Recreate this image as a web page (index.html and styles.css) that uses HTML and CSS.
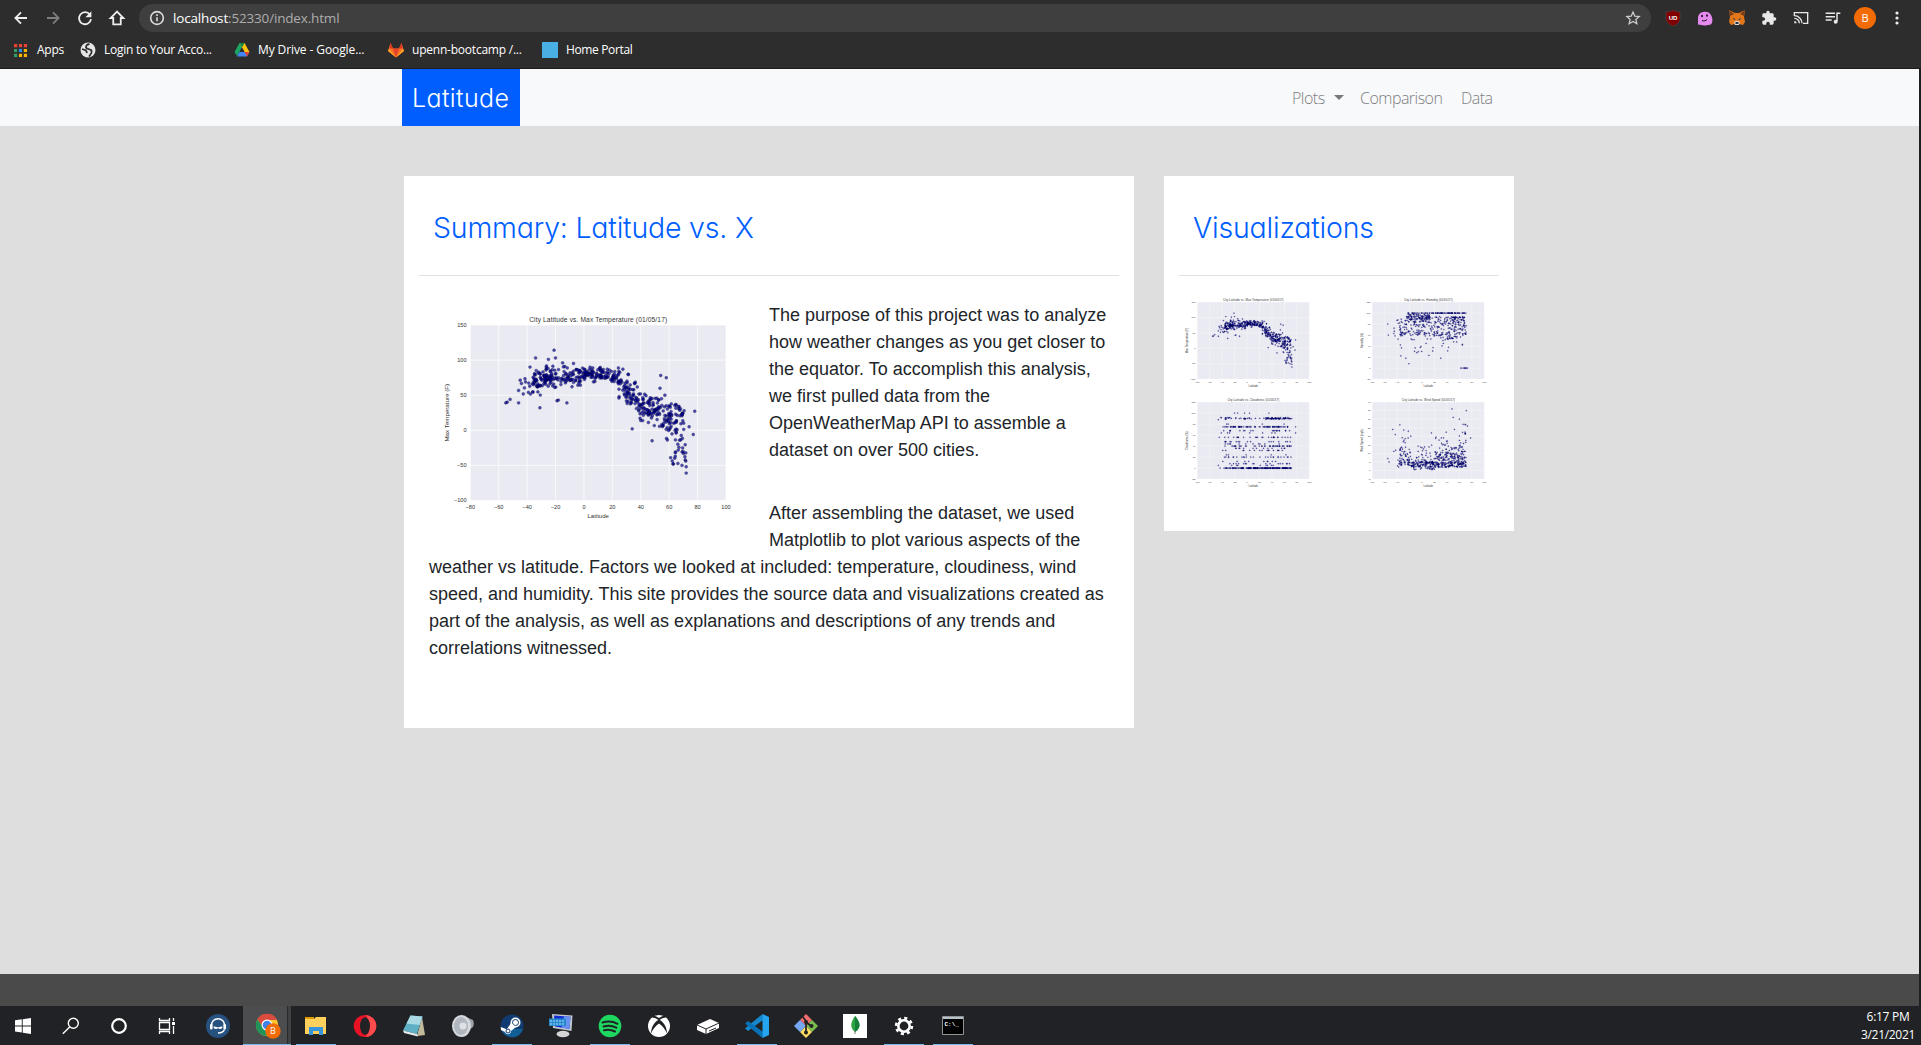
FILE: index.html
```html
<!DOCTYPE html>
<html lang="en">
<head>
<meta charset="utf-8">
<title>Latitude</title>
<link rel="stylesheet" href="styles.css">
</head>
<body>
<header class="chrome">
  <div class="toolbar">
    <div class="nav-buttons">
      <svg viewBox="0 0 24 24" class="ico"><path d="M20 12H5M12 4.500 4.500 12 12 19.500" class="line"/></svg>
      <svg viewBox="0 0 24 24" class="ico dim"><path d="M4 12h15M12 4.500 19.500 12 12 19.500" class="line"/></svg>
      <svg viewBox="0 0 24 24" class="ico"><path d="M18.500 7.500A8 8 0 1 0 20 13.500" class="line"/><path d="M20.500 3v8h-8z" fill="#eee"/></svg>
      <svg viewBox="0 0 24 24" class="ico"><path d="M12 3.500 3.500 12H7v8.500h10V12h3.500z" class="line"/></svg>
    </div>
    <div class="omnibox">
      <svg viewBox="0 0 24 24" class="info"><circle cx="12" cy="12" r="9.500" class="line"/><path d="M12 11v6M12 6.500v2.500" class="line"/></svg>
      <span class="url"><b>localhost</b>:52330/index.html</span>
      <svg viewBox="0 0 24 24" class="star"><path d="m12 3 2.700 6.200 6.600.6-5 4.400 1.500 6.500-5.800-3.500-5.800 3.500 1.500-6.500-5-4.400 6.600-.6z" fill="none" stroke="#ccc" stroke-width="1.900"/></svg>
    </div>
    <div class="extensions">
      <svg viewBox="0 0 16 16"><path d="M8 0c2 1.300 4 2 7 2v6c0 4-3 6.500-7 8-4-1.500-7-4-7-8V2c3 0 5-.7 7-2z" fill="#800000" stroke="#555" stroke-width=".5"/><text x="8" y="9.600" class="ub">UD</text></svg>
      <svg viewBox="0 0 16 16"><path d="M1 14.500V7a7 6.500 0 0 1 13.500-1c1.500 4 1.500 9-3 9-1 0-2 .6-4 .6z" fill="#e78af0"/><ellipse cx="5" cy="6" rx=".8" ry="1.200"/><ellipse cx="10" cy="5.500" rx=".8" ry="1.200"/><path d="M5 10.500c2 1 4 0 5-1" fill="none" stroke="#111"/></svg>
      <svg viewBox="0 0 16 16"><path d="m0 0 6 3h4l6-3-1 7 1 5-2 3-4-1H6l-4 1-2-3 1-5z" fill="#e2761b"/><path d="m0 0 5 4-4 2zM16 0l-5 4 4 2z" fill="#763d16"/><path d="m5 12 2-1h2l2 1-1 3H6z" fill="#e4d9cc"/><path d="M6.500 12h3v2h-3zM3.500 8l3 1-1 1zM12.500 8l-3 1 1 1z" fill="#233447"/></svg>
      <svg viewBox="0 0 24 24"><path d="M20.500 11H19V7a2 2 0 0 0-2-2h-4V3.500a2.500 2.500 0 0 0-5 0V5H4a2 2 0 0 0-2 2v3.800h1.500a2.700 2.700 0 0 1 0 5.400H2V20a2 2 0 0 0 2 2h3.800v-1.500a2.700 2.700 0 0 1 5.400 0V22H17a2 2 0 0 0 2-2v-4h1.500a2.500 2.500 0 0 0 0-5z" fill="#e8e8e8"/></svg>
      <svg viewBox="0 0 24 24"><path d="M2 9V4h20v16h-7M2 12.500A7.500 7.500 0 0 1 9.500 20M2 8.500A11.500 11.500 0 0 1 13.500 20" fill="none" stroke="#e8e8e8" stroke-width="2"/><path d="M2 16.500V20h3.500A3.500 3.500 0 0 0 2 16.500" fill="#e8e8e8"/></svg>
      <svg viewBox="0 0 24 24"><path d="M1 5h14M1 10h14M1 15h9M18 17V5h5" fill="none" stroke="#e8e8e8" stroke-width="2.200"/><circle cx="16" cy="17.500" r="3" fill="#e8e8e8"/></svg>
      <span class="avatar">B</span>
      <svg viewBox="0 0 16 16" fill="#eee"><circle cx="8" cy="3" r="1.600"/><circle cx="8" cy="8" r="1.600"/><circle cx="8" cy="13" r="1.600"/></svg>
    </div>
  </div>
  <div class="bookmarks">
    <a class="bm apps"><svg viewBox="0 0 14 14"><path d="M0 0h3.400v3.400H0zM5.300 0h3.400v3.400H5.300zM10.600 0H14v3.400h-3.400z" fill="#ea4335"/><path d="M0 5.300h3.400v3.400H0zM0 10.600h3.400V14H0z" fill="#34a066"/><path d="M5.300 5.300h3.400v3.400H5.300z" fill="#2a8cf5"/><path d="M10.600 5.300H14v3.400h-3.400zM5.300 10.600h3.400V14H5.300zM10.600 10.600H14V14h-3.400z" fill="#fbb400"/></svg><span>Apps</span></a>
    <a class="bm login"><svg viewBox="0 0 16 16"><circle cx="8" cy="8" r="7.500" fill="#e6e6e6"/><path d="M9.500 2C6 2.500 5 5 7 6.500l4 1.500c2 2 0 4-2 6.500M2 7l4 1.500 1 2.500" fill="none" stroke="#303030" stroke-width="1.800"/></svg><span>Login to Your Acco...</span></a>
    <a class="bm drive"><svg viewBox="0 0 16 16"><path d="M5.500 1h5L8 5.500 3 14 .5 10z" fill="#1da362"/><path d="M5.500 1h5l5 9h-5z" fill="#ffc107"/><path d="M5.500 1 8 5.500 10.500 1z" fill="#12834b"/><path d="M5.300 10h10.200L13 14.500H3z" fill="#4285f4"/><path d="m10.500 10 2.500 4.500 2.500-4.500z" fill="#ea4335"/><path d="m8 5.700 2.500 4.300h-5z" fill="#2d2d2d"/></svg><span>My Drive - Google...</span></a>
    <a class="bm upenn"><svg viewBox="0 0 16 16"><path d="M0 9 2.500 1 5 6.500h6L13.500 1 16 9l-8 6.500z" fill="#fc6d26"/><path d="M5 6.500h6l-3 9z" fill="#e24329"/><path d="M0 9 1.200 6.500 8 15.500zM16 9l-1.200-2.500L8 15.500z" fill="#fca326"/><path d="M2.500 1 1.200 6.500H5zM13.500 1l1.300 5.500H11z" fill="#d93a22"/></svg><span>upenn-bootcamp /...</span></a>
    <a class="bm portal"><i class="square"></i><span>Home Portal</span></a>
  </div>
</header>

<div class="page">
  <nav class="navbar">
    <a class="brand">Latitude</a>
    <div class="links"><a class="plots">Plots<i class="caret"></i></a><a class="comparison">Comparison</a><a class="data">Data</a></div>
  </nav>
  <main class="content">
    <section class="card summary">
      <h1 class="t-summary">Summary: Latitude vs. X</h1>
      <hr>
      <div class="copy">
        <svg class="chart big" data-kind="temp" viewBox="0 0 340 228"></svg>
        <p>The purpose of this project was to analyze how weather changes as you get closer to the equator. To accomplish this analysis, we first pulled data from the OpenWeatherMap API to assemble a dataset on over 500 cities.</p>
        <p>After assembling the dataset, we used Matplotlib to plot various aspects of the weather vs latitude. Factors we looked at included: temperature, cloudiness, wind speed, and humidity. This site provides the source data and visualizations created as part of the analysis, as well as explanations and descriptions of any trends and correlations witnessed.</p>
      </div>
    </section>
    <section class="card visuals">
      <h1 class="t-visuals">Visualizations</h1>
      <hr>
      <div class="thumbs">
        <svg class="chart" data-kind="temp" viewBox="0 0 340 228"></svg>
        <svg class="chart" data-kind="humidity" viewBox="0 0 340 228"></svg>
        <svg class="chart" data-kind="cloud" viewBox="0 0 340 228"></svg>
        <svg class="chart" data-kind="wind" viewBox="0 0 340 228"></svg>
      </div>
    </section>
  </main>
  <footer class="footer"></footer>
</div>

<div class="taskbar">
  <div class="system">
    <span><svg viewBox="0 0 24 24" width="24" height="24" fill="#fff"><path d="M4 6.300 10.800 5.300v6.200H4zM11.700 5.200 20 4v7.500h-8.300zM4 12.400h6.800v6.200L4 17.600zM11.700 12.400H20V20l-8.300-1.200z"/></svg></span>
    <span><svg viewBox="0 0 18 18" width="18" height="18" fill="none" stroke="#fff" stroke-width="1.400"><circle cx="11.300" cy="6.300" r="5"/><path d="m7.700 9.900-6.900 6.900"/></svg></span>
    <span><svg viewBox="0 0 18 18" width="18" height="18" fill="none" stroke="#fff" stroke-width="2.200"><circle cx="9" cy="9" r="6.800"/></svg></span>
    <span><svg viewBox="0 0 18 18" width="18" height="18" fill="none" stroke="#fff" stroke-width="1.300"><path d="M1.500 1v2.500h10V1M1.500 5.500h10v7h-10zM1.500 17v-2.500h10V17M15.500 1v3M15.500 9v8"/><path d="M14 5h3v3h-3z" fill="#fff" stroke="none"/></svg></span>
  </div>
  <div class="apps-row">
    <span><svg viewBox="0 0 24 24"><circle cx="12" cy="12" r="12" fill="#27517f"/><path d="M5.500 11a6.500 6.300 0 0 1 13 0" fill="none" stroke="#fff" stroke-width="1.600"/><rect x="4" y="10" width="2.600" height="5.500" rx="1.300" fill="#fff"/><rect x="17.400" y="10" width="2.600" height="5.500" rx="1.300" fill="#fff"/><path d="M7.500 12.500c2-.5 3 .8 4.500.8s2.500-1.300 4.500-.8c0 3-3.500 3-4.500 1.500-1 1.500-4.500 1.500-4.500-1.500" fill="#fff"/><path d="M18.500 15.500c-1 2.500-3.500 3.500-6.500 3.500" fill="none" stroke="#fff" stroke-width="1.400"/></svg></span>
    <span class="active on"><svg viewBox="0 0 26 26" width="26" height="26"><circle cx="12" cy="12" r="11" fill="#fbc52b"/><path d="M2.300 6.500A11 11 0 0 1 22 7H12l-5 6z" fill="#db4b3f"/><path d="M2.300 6.500A11 11 0 0 0 11 23l5-8-8-1z" fill="#20945a"/><circle cx="12" cy="12" r="5.500" fill="#fff"/><circle cx="12" cy="12" r="4.300" fill="#3f82ea"/><circle cx="18" cy="18" r="7.700" fill="#f26b05"/><text x="18" y="21.200" class="badge">B</text></svg></span>
    <span class="on"><svg viewBox="0 0 24 24"><path d="M1 3h9v3H1z" fill="#df9a00"/><path d="M1 5h9l2-2h10v17H1z" fill="#ffd15c"/><path d="M5 21v-8h14v8h-4v-4H9v4z" fill="#3695dc"/></svg></span>
    <span><svg viewBox="0 0 24 24"><ellipse cx="12" cy="12" rx="11.300" ry="11" fill="#e81224"/><path d="M12 1a11.300 11 0 0 1 0 22c5-2 5-20 0-22" fill="#ff4b4b"/><ellipse cx="12" cy="12" rx="5" ry="8.800" fill="#202225"/></svg></span>
    <span><svg viewBox="0 0 24 24"><path d="m20 3 3 18-8 1z" fill="#c1b99c"/><path d="M8.500 1.500 20.500 2.500 15 20 1 16.500z" fill="#5fb0c4"/><path d="m8.500 1.500 12 1-2.800 8.500L4.500 9.500z" fill="#a9dae3"/><path d="m1 16.500 14 3.500 1 2.500-14-3.500z" fill="#e6eceb"/></svg></span>
    <span><svg viewBox="0 0 24 24"><path d="m10 1 12 5c2 5 0 8-3 9l-7 8z" fill="#9ca3ab"/><ellipse cx="10.500" cy="12" rx="9.500" ry="11" fill="#d5d9dd"/><ellipse cx="10" cy="12" rx="7" ry="9" fill="#b1b7bf"/><circle cx="12" cy="12" r="3.500" fill="#dee1e5"/></svg></span>
    <span class="on split"><svg viewBox="0 0 24 24"><circle cx="12" cy="12" r="11.500" fill="#103a70"/><path d="M1 15a11.500 11.500 0 0 0 22 0z" fill="#125f95"/><circle cx="15.500" cy="8.500" r="5" fill="#fff"/><circle cx="15.500" cy="8.500" r="3" fill="none" stroke="#103a70"/><path d="m.7 13 6 2.300L11 9l5 4-5 4c0 4-5 4-6 1l-4-2z" fill="#fff"/><circle cx="8" cy="17" r="2" fill="none" stroke="#103a70"/></svg></span>
    <span><svg viewBox="0 0 24 24"><path d="m3 0 20.500 1.500-1 15.500L4 14z" fill="#c4c8ce"/><path d="m5 1.500 16.500 1.200-1 12.300L6 12.500z" fill="#112bd2"/><path d="m15 2.300 6.500.4-1 12.300-8-1.500z" fill="#6b91ef"/><ellipse cx="14" cy="20" rx="6.500" ry="3.200" fill="#d5d5d5"/><path d="M0 4.500h17v7.500H0z" fill="#2689ce"/><path d="M1 7h15M1 10h15" stroke="#a9ddfa" stroke-dasharray="2 1"/></svg></span>
    <span class="on"><svg viewBox="0 0 24 24"><circle cx="12" cy="12" r="11.300" fill="#1ed760"/><path d="M4.500 8.500c5-1.500 11-1 15 1.300M5.500 12.500c4-1.200 9-.8 12.800 1.200M6 16.300c4-.9 7.500-.5 11 1.200" fill="none" stroke="#202225" stroke-width="2" stroke-linecap="round"/></svg></span>
    <span><svg viewBox="0 0 24 24"><circle cx="12" cy="12" r="11" fill="#fff"/><path d="M5.500 2.800C8 2.500 10.500 4 12 5.200c1.500-1.200 4-2.700 6.500-2.400" fill="none" stroke="#202225" stroke-width="1.800"/><path d="M9.300 7.300C5.500 11 4 15 4 19.500 6 15 9 11.500 12 9.500c3 2 6 5.500 8 10 0-4.500-1.500-8.500-5.300-12.200L12 5.500z" fill="#202225"/></svg></span>
    <span><svg viewBox="0 0 24 24"><path d="m1 11 13-6 9 4v5l-13 6-9-4z" fill="#fff"/><path d="m1 11 9 4 13-6M10 15v5M13 17l7-3" fill="none" stroke="#202225"/></svg></span>
    <span class="on"><svg viewBox="0 0 24 24"><path d="m17.500 0 .5 6-15 11L0 14.500z" fill="#1388cf"/><path d="M0 9.500 3 7l15 11-.5 6z" fill="#0872b9"/><path d="m17.500 0 6.500 3v18l-6.500 3z" fill="#25a5f1"/></svg></span>
    <span><svg viewBox="0 0 24 24"><path d="m12 0 6 6-6 6-6-6z" fill="#f26d6d"/><path d="m18 6 6 6-6 6-6-6z" fill="#78bd4d"/><path d="m12 12 6 6-6 6-6-6z" fill="#ffdd63"/><path d="m6 6 6 6-6 6-6-6z" fill="#75a7f2"/><path d="M8.500 2.500 12 7v12M12 8l5 4" fill="none" stroke="#202225" stroke-width="1.700"/><circle cx="12" cy="8" r="2" fill="#202225"/><circle cx="12" cy="18.500" r="2" fill="#202225"/><circle cx="17.500" cy="12" r="2" fill="#202225"/></svg></span>
    <span><svg viewBox="0 0 24 24"><path d="M0 0h24v24H0z" fill="#fff"/><path d="M12 2c6 7 6 12 0 16-5-4-5-9 0-16" fill="#2ca442"/><path d="M12 2c6 7 6 12 0 16z" fill="#168038"/><path d="M12 17v3" stroke="#777"/></svg></span>
    <span class="on"><svg viewBox="0 0 24 24" fill="none" stroke="#fff"><circle cx="12" cy="12" r="5.700" stroke-width="2.600"/><circle cx="12" cy="12" r="7.900" stroke-width="2.600" stroke-dasharray="3.100 3.100"/></svg></span>
    <span class="on"><svg viewBox="0 0 24 24"><path d="M1.500 2.500h21v18h-21z" fill="#000" stroke="#939393"/><path d="M2 3h20v2H2z" fill="#b5c2cc"/><text x="3.500" y="11.500" class="cmd">C:\_</text></svg></span>
  </div>
  <div class="clock"><span class="time">6:17 PM</span><span class="date">3/21/2021</span></div>
</div>
<script src="charts.js"></script>
</body>
</html>
```
FILE: styles.css
```css
* { box-sizing: border-box; }
body {
  margin: 0;
  height: 1045px;
  display: flex;
  flex-direction: column;
  overflow: hidden;
  background: #1d1f22;
  font-family: "Open Sans", "Noto Sans", sans-serif;
}
svg { display: block; flex: none; }

/* browser chrome */
.chrome {
  height: 69px;
  flex: none;
  background: #2d2d2d;
  border-bottom: 1px solid #1c1c1c;
  color: #fff;
}
.toolbar { display: flex; height: 36px; padding-top: 4px; }
.nav-buttons { display: flex; gap: 14px; width: 139px; padding-left: 12px; align-items: center; height: 28px; }
.ico { width: 18px; height: 18px; color: #eee; }
.ico.dim { color: #7d7d7d; }
.line { fill: none; stroke: currentColor; stroke-width: 2.4; }
.omnibox {
  display: flex;
  align-items: center;
  width: 1512px;
  height: 28px;
  border-radius: 14px;
  background: #3f3f3f;
  padding: 0 10px 0 10px;
}
.info { width: 16px; height: 16px; color: #ddd; }
.url { flex: 1; margin-left: 8px; font-size: 13.5px; letter-spacing: -.17px; color: #adadad; }
.url b { font-weight: 400; color: #fff; }
.star { width: 16px; height: 16px; }
.extensions { display: flex; align-items: center; gap: 16px; height: 28px; padding-left: 14px; }
.extensions svg { width: 16px; height: 16px; }
.ub { font: bold 6px "Liberation Sans", sans-serif; fill: #fff; text-anchor: middle; }
.avatar {
  width: 22px; height: 22px; margin: 0 -3px; border-radius: 50%;
  background: #f26b05; font-size: 11px; line-height: 22px; text-align: center;
}
.bookmarks { display: flex; height: 28px; align-items: center; font-size: 12px; line-height: 16px; padding-left: 14px; }
.bm { display: flex; align-items: center; white-space: nowrap; letter-spacing: -.26px; }
.bm span { padding-bottom: 1px; }
.bm svg { width: 16px; height: 16px; margin-right: 8px; }
.bm.apps { width: 66px; }
.bm.apps svg { width: 13px; height: 13px; margin-right: 10px; }
.bm.login { width: 154px; }
.bm.drive { width: 154px; letter-spacing: -.1px; }
.bm.upenn { width: 154px; letter-spacing: -.22px; }
.bm.portal { letter-spacing: -.36px; }
.square { width: 16px; height: 16px; margin-right: 8px; background: #4ab0e4; }

/* page */
.page { flex: 1; display: flex; flex-direction: column; width: 1919px; background: #dedede; }
.navbar {
  height: 57px;
  flex: none;
  display: flex;
  justify-content: space-between;
  background: #f8f9fb;
  padding: 0 425px 0 402px;
}
.brand {
  width: 118px;
  background: #005eff;
  color: #fff;
  font: 350 25px/58px Inter, sans-serif;
  font-feature-settings: "cv11";
  letter-spacing: .4px;
  padding-left: 10px;
}
.links { display: flex; align-items: center; gap: 16px; font-size: 16px; font-weight: 350; letter-spacing: -.52px; color: #7d7e80; }
.plots { display: flex; align-items: center; width: 52px; justify-content: space-between; }
.comparison { width: 85px; }
.data { width: 33px; }
.caret { border: 5px solid transparent; border-top-color: #77787a; border-bottom: 0; }
.content { flex: 1; display: flex; align-items: flex-start; gap: 30px; padding: 50px 0 0 404px; }
.card { background: #fff; padding: 0 15px; }
.summary { width: 730px; height: 552px; }
.visuals { width: 350px; height: 355px; }
.card h1 {
  margin: 0;
  height: 99px;
  padding: 30px 0 0 14px;
  font: 300 28.5px/43px Inter, sans-serif;
  font-feature-settings: "cv11";
  letter-spacing: -.2px;
  color: #005eff;
  white-space: nowrap;
}
.card hr { margin: 0; border: 0; height: 1px; background: #e1e1e1; }
.copy { padding: 26px 10px 0; font: 18px/27px "Liberation Sans", Arial, sans-serif; color: #212529; }
.copy p { margin: 0 0 36px; }
.chart.big { float: left; width: 340px; height: 228px; margin-bottom: 14px; }
.thumbs { display: grid; grid-template-columns: 175px 150px; grid-auto-rows: 100px; padding-top: 16px; }
.thumbs .chart { width: 149.300px; height: 100px; }
.chart text { font-family: "Liberation Sans", Arial, sans-serif; fill: #333; }
.footer { height: 32px; background: #4a4a4a; }

/* taskbar */
.taskbar { height: 39px; flex: none; display: flex; background: #202225; color: #fff; }
.system { display: flex; width: 193px; margin-left: -1px; }
.system span { width: 48px; display: flex; align-items: center; justify-content: center; }
.apps-row { display: flex; flex: 1; margin-left: 2px; }
.apps-row span { position: relative; width: 49px; display: flex; align-items: center; justify-content: center; }
.apps-row svg { width: 24px; height: 24px; margin-right: 2px; }
.apps-row .active { background: linear-gradient(90deg, #4c4d4f 44px, #292b2d 44px 45px, #3f4143 45px 48px, transparent 48px); }
.apps-row .active svg { width: 26px; height: 26px; margin: 0; }
.on::after { content: ""; position: absolute; left: 4px; right: 5px; bottom: 0; height: 1px; background: #76b9ed; }
.on.active::after { left: 0; right: 1px; }
.badge { font: 9px "Open Sans", sans-serif; fill: #fff; text-anchor: middle; }
.cmd { font: bold 6px "Liberation Mono", monospace; fill: #fff; }
.clock { width: 100px; display: flex; flex-direction: column; align-items: center; font-size: 12px; line-height: 18px; letter-spacing: -.3px; padding: 2px 0 0 34px; }
```
FILE: charts.js
```js
// Scatter plots of city weather against latitude, drawn on one shared frame.
const NS = 'http://www.w3.org/2000/svg';
const L = 41.3, T = 23, W = 255.7, H = 175.5;
let seed = 7;
const rnd = () => (seed = (seed * 16807) % 2147483647) / 2147483647;
const gauss = () => (rnd() + rnd() + rnd() + rnd() - 2) * 1.7;
const pick = a => a[Math.floor(rnd() * a.length)];

function add(parent, tag, attrs, text) {
  const e = document.createElementNS(NS, tag);
  for (const k in attrs) e.setAttribute(k, attrs[k]);
  if (text !== undefined) e.textContent = text;
  parent.appendChild(e);
}

function latitude() {
  const r = rnd();
  if (r < 0.30) return -36 + rnd() * 36;
  if (r < 0.48) return rnd() * 24;
  if (r < 0.98) return 24 + rnd() * 47;
  return -47 + rnd() * 11;
}

const curve = [[-55, 39], [-45, 55], [-35, 68], [-25, 75], [-10, 76], [0, 79], [18, 79], [25, 70], [32, 52], [40, 38], [50, 26], [60, 12], [66, 2], [73, -5]];
function meanTemp(x) {
  for (let i = 1; i < curve.length; i++) {
    const [a, p] = curve[i - 1], [b, q] = curve[i];
    if (x <= b) return p + (q - p) * (x - a) / (b - a);
  }
  return -10;
}

const kinds = {
  temp: {
    title: 'City Latitude vs. Max Temperature (01/05/17)', len: 138, label: 'Max Temperature (F)', min: -100, max: 150, step: 50,
    extra: [[-21, 114], [-34, 103], [-20, 103], [-25, 101], [-15, 96], [-38, 90], [-55, 39], [-54, 40], [-52, 44], [-46, 39], [-31, 32], [-19, 42], [-18, 43], [-12, 39], [54, 78], [58, 75], [57, 50], [78, 27], [77, -6], [34, 2], [72, -61], [72, -52], [69, -50], [63, -48], [61, -39], [70, -33], [48, -15], [74, 5]],
    point() {
      const x = latitude();
      if (x > 62 && rnd() < 0.28) return [62 + rnd() * 10, -20 - rnd() * 30];
      if (x > 48 && rnd() < 0.3) return [x, 20 + rnd() * 18];
      const s = x > 50 ? 15 : x > 24 ? 11 : x > 0 ? 5 : 8.5;
      return [x, meanTemp(x) + gauss() * s];
    }
  },
  humidity: {
    title: 'City Latitude vs. Humidity (01/05/17)', len: 111, label: 'Humidity (%)', min: -20, max: 120, step: 20,
    extra: [[-21, 8], [-26, 18], [-34, 22], [62, 0], [64, 0], [67, 0], [68, 0], [69, 0], [70, 0], [71, 0], [73, 0], [30, 18], [11, 23], [-55, 80], [-54, 60]],
    point() {
      const x = latitude(), r = rnd();
      if (r < 0.18 && x > -26) return [x, 100];
      if (r < 0.28) return [-22 + rnd() * 35, 98 - rnd() * 10];
      if (r < 0.32) return [48 + rnd() * 20, 92];
      if (r < 0.38) return [x, 28 + rnd() * 35];
      return [x, 94 - rnd() * (x > 30 ? 42 : 36)];
    }
  },
  cloud: {
    title: 'City Latitude vs. Cloudiness (01/05/17)', len: 118, label: 'Cloudiness (%)', min: -20, max: 120, step: 20,
    extra: [[-20, 100], [-15, 100], [-4, 100], [4, 100], [35, 100], [-46, 88], [78, 75], [78, 64]],
    point() {
      const x = latitude(), r = rnd();
      if (r < 0.28) return [x, 0];
      if (r < 0.42) return [x, 75];
      if (r < 0.50) return [32 + rnd() * 40, 90];
      if (r < 0.60) return [x, 89 + rnd() * 3];
      if (r < 0.66) return [x, 20];
      if (r < 0.73) return [x, 40];
      return [x, pick([5, 8, 8, 12, 24, 32, 32, 36, 36, 44, 48, 48, 56, 56, 64, 68, 68, 80])];
    }
  },
  wind: {
    title: 'City Latitude vs. Wind Speed (01/05/17)', len: 121, label: 'Wind Speed (mph)', min: -5, max: 40, step: 5,
    extra: [[48, 36], [71, 35], [50, 31], [60, 30], [66, 27], [69, 27], [73, 26], [52, 24], [-47, 24], [-43, 21], [-22, 23], [15, 22], [78, 19], [-55, 7], [-53, 5]],
    point() {
      const x = latitude(), edge = x > 20 || x < -18;
      if (rnd() < 0.3) return [x, 2 + rnd() * 3];
      const base = edge ? 4.5 : 1.5;
      return [x, base - 3 + rnd() * 6 + Math.min(20, -Math.log(1 - rnd()) * (edge ? 4.8 : 3.5))];
    }
  }
};

document.querySelectorAll('.chart').forEach(svg => {
  const k = kinds[svg.dataset.kind];
  seed = 20170;
  const X = v => L + (v + 80) / 180 * W;
  const Y = v => T + (k.max - v) / (k.max - k.min) * H;
  add(svg, 'rect', { x: L, y: T, width: W, height: H, fill: '#eaeaf2' });
  for (let v = -80; v <= 100; v += 20) {
    add(svg, 'path', { d: `M${X(v)} ${T}v${H}`, stroke: '#fff', 'stroke-width': 0.7 });
    add(svg, 'text', { x: X(v), y: 207, 'font-size': 5.6, 'text-anchor': 'middle' }, String(v).replace('-', '−'));
  }
  for (let v = k.min; v <= k.max; v += k.step) {
    add(svg, 'path', { d: `M${L} ${Y(v)}h${W}`, stroke: '#fff', 'stroke-width': 0.7 });
    add(svg, 'text', { x: 37.5, y: Y(v) + 1.800, 'font-size': 5.6, 'text-anchor': 'end' }, String(v).replace('-', '−'));
  }
  add(svg, 'text', { x: L + W / 2, y: 19.800, 'font-size': 6.6, 'text-anchor': 'middle', textLength: k.len }, k.title);
  add(svg, 'text', { x: L + W / 2, y: 215.800, 'font-size': 6, 'text-anchor': 'middle' }, 'Latitude');
  add(svg, 'text', { transform: `translate(20 ${T + H / 2}) rotate(-90)`, 'font-size': 6.2, 'text-anchor': 'middle' }, k.label);
  const pts = k.extra.slice();
  while (pts.length < 560) {
    const p = k.point();
    if (svg.dataset.kind !== 'wind' || p[1] > 0.5) pts.push(p);
  }
  for (const [a, b] of pts) {
    add(svg, 'circle', { cx: X(a).toFixed(1), cy: Y(b).toFixed(1), r: 1.45, fill: '#0000a0', stroke: '#000030', 'stroke-width': 0.5, opacity: 0.7 });
  }
});
```
